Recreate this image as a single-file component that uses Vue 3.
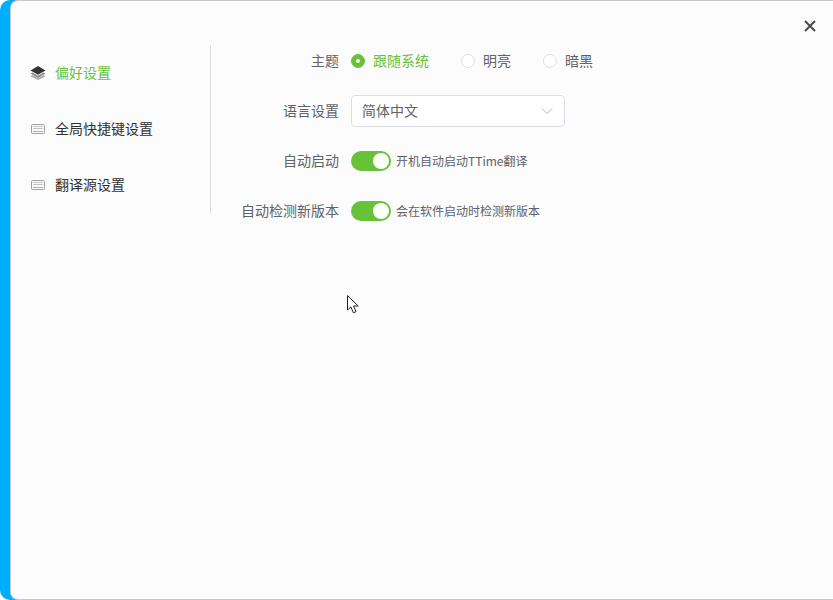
<template>
  <div class="window">
    <div class="panel">
      <button class="close" aria-label="关闭">
        <svg width="14" height="14" viewBox="0 0 14 14">
          <path d="M2 2L12 12M12 2L2 12" stroke="#4a4a4c" stroke-width="2" fill="none" />
        </svg>
      </button>

      <div class="content">
        <ul class="menu">
          <li
            v-for="item in menus"
            :key="item.name"
            class="menu-item"
            :class="{ active: item.active }"
          >
            <svg v-if="item.icon === 'layers'" class="menu-icon" viewBox="0 0 16 14">
              <path d="M8 0L15.5 4.4L8 8.8L0.5 4.4Z" fill="#333" />
              <path d="M2.4 6.5L0.5 7.6L8 12L15.5 7.6L13.6 6.5L8 9.8Z" fill="#8a8a8a" />
              <path d="M2.4 9.2L0.5 10.2L8 14L15.5 10.2L13.6 9.2L8 12.6Z" fill="#a2a2a2" />
            </svg>
            <svg v-else class="menu-icon" viewBox="0 0 16 14">
              <rect x="1.5" y="2.5" width="13" height="9" rx="1" fill="#fafafa" stroke="#a0a0a0" />
              <path d="M3 4.5H13M3 6.5H13" stroke="#c8c8c8" />
              <path d="M3 9.5H13" stroke="#b0b0b0" />
            </svg>
            <span class="text">{{ item.name }}</span>
          </li>
        </ul>

        <div class="form">
          <div class="form-row">
            <label class="form-label text">主题</label>
            <div class="radios">
              <div
                v-for="option in themes"
                :key="option"
                class="radio"
                :class="{ checked: option === theme }"
              >
                <span class="radio-dot"></span>
                <span class="text">{{ option }}</span>
              </div>
            </div>
          </div>

          <div class="form-row">
            <label class="form-label text">语言设置</label>
            <div class="select">
              <span class="text">简体中文</span>
              <svg width="12" height="12" viewBox="0 0 12 12">
                <path d="M1 3.5L6 8.5L11 3.5" stroke="#b4b7bd" fill="none" />
              </svg>
            </div>
          </div>

          <div v-for="item in switches" :key="item.label" class="form-row">
            <label class="form-label text">{{ item.label }}</label>
            <span class="switch"><span class="switch-knob"></span></span>
            <span class="switch-text text">{{ item.text }}</span>
          </div>
        </div>
      </div>

      <svg class="cursor" width="14" height="21" viewBox="0 0 14 21">
        <path
          d="M1.5 1.5V16L4.9 12.9L7.4 18.8L10 17.7L7.5 12H12.2Z"
          fill="#fff"
          stroke="#222"
          stroke-width="1"
          stroke-linejoin="round"
        />
      </svg>
    </div>
  </div>
</template>

<script setup>
import { ref } from 'vue'

const theme = ref('跟随系统')
const themes = ['跟随系统', '明亮', '暗黑']

const menus = [
  { name: '偏好设置', icon: 'layers', active: true },
  { name: '全局快捷键设置', icon: 'keyboard' },
  { name: '翻译源设置', icon: 'keyboard' }
]

const switches = [
  { label: '自动启动', text: '开机自动启动TTime翻译' },
  { label: '自动检测新版本', text: '会在软件启动时检测新版本' }
]
</script>

<style>
html,
body {
  margin: 0;
  background: #fff;
  overflow: hidden;
}
</style>

<style scoped>
.window {
  width: 833px;
  height: 600px;
  background: #00aeff;
  border-radius: 10px 0 0 10px;
  padding-left: 10px;
  box-sizing: border-box;
  font-family: "Noto Sans CJK SC", "Liberation Sans", sans-serif;
  font-size: 14px;
}

.panel {
  position: relative;
  height: 100%;
  box-sizing: border-box;
  background: #fcfcfd;
  border-top: 1px solid #c8c8c8;
  border-bottom: 1px solid #c8c8c8;
  border-left: 1px solid #c8c8c8;
  border-radius: 8px 0 0 8px;
  padding-top: 44px;
}

.close {
  position: absolute;
  top: 18px;
  right: 16px;
  width: 14px;
  height: 14px;
  padding: 0;
  border: 0;
  background: none;
  display: flex;
}

.content {
  display: flex;
  align-items: flex-start;
}

.menu {
  width: 199px;
  height: 168px;
  margin: 0;
  padding: 0;
  list-style: none;
  border-right: 1px solid #dcdfe6;
  flex-shrink: 0;
}

.menu-item {
  height: 56px;
  display: flex;
  align-items: center;
  padding-left: 19px;
  color: #303133;
}

.menu-item.active {
  color: #67c23a;
}

.menu-icon {
  width: 16px;
  height: 14px;
  margin-right: 9px;
}

/* the CJK font sits a pixel low in its line box */
.text {
  padding-bottom: 2px;
}

.form {
  flex: 1;
}

.form-row {
  height: 32px;
  margin-bottom: 18px;
  display: flex;
  align-items: center;
}

.form-label {
  width: 128px;
  margin-right: 12px;
  text-align: right;
  color: #606266;
}

.radios {
  display: flex;
  gap: 32px;
}

.radio {
  display: flex;
  align-items: center;
  gap: 8px;
  color: #606266;
}

.radio.checked {
  color: #67c23a;
}

.radio-dot {
  width: 14px;
  height: 14px;
  box-sizing: border-box;
  border: 1px solid #dcdfe6;
  border-radius: 50%;
  background: #fff;
  display: flex;
  align-items: center;
  justify-content: center;
}

.radio.checked .radio-dot {
  background: #67c23a;
  border-color: #67c23a;
}

.radio.checked .radio-dot::after {
  content: "";
  width: 4px;
  height: 4px;
  border-radius: 50%;
  background: #fff;
}

.select {
  width: 214px;
  height: 32px;
  box-sizing: border-box;
  padding: 0 11px 0 10px;
  border: 1px solid #dcdfe6;
  border-radius: 4px;
  background: #fff;
  color: #606266;
  display: flex;
  align-items: center;
  justify-content: space-between;
}

.switch {
  width: 40px;
  height: 20px;
  border-radius: 10px;
  background: #67c23a;
  display: flex;
  align-items: center;
  justify-content: flex-end;
  padding-right: 2px;
  box-sizing: border-box;
}

.switch-knob {
  width: 16px;
  height: 16px;
  border-radius: 50%;
  background: #fff;
}

.switch-text {
  margin-left: 5px;
  font-size: 12px;
  color: #606266;
}

.cursor {
  position: absolute;
  left: 335px;
  top: 293px;
}
</style>
